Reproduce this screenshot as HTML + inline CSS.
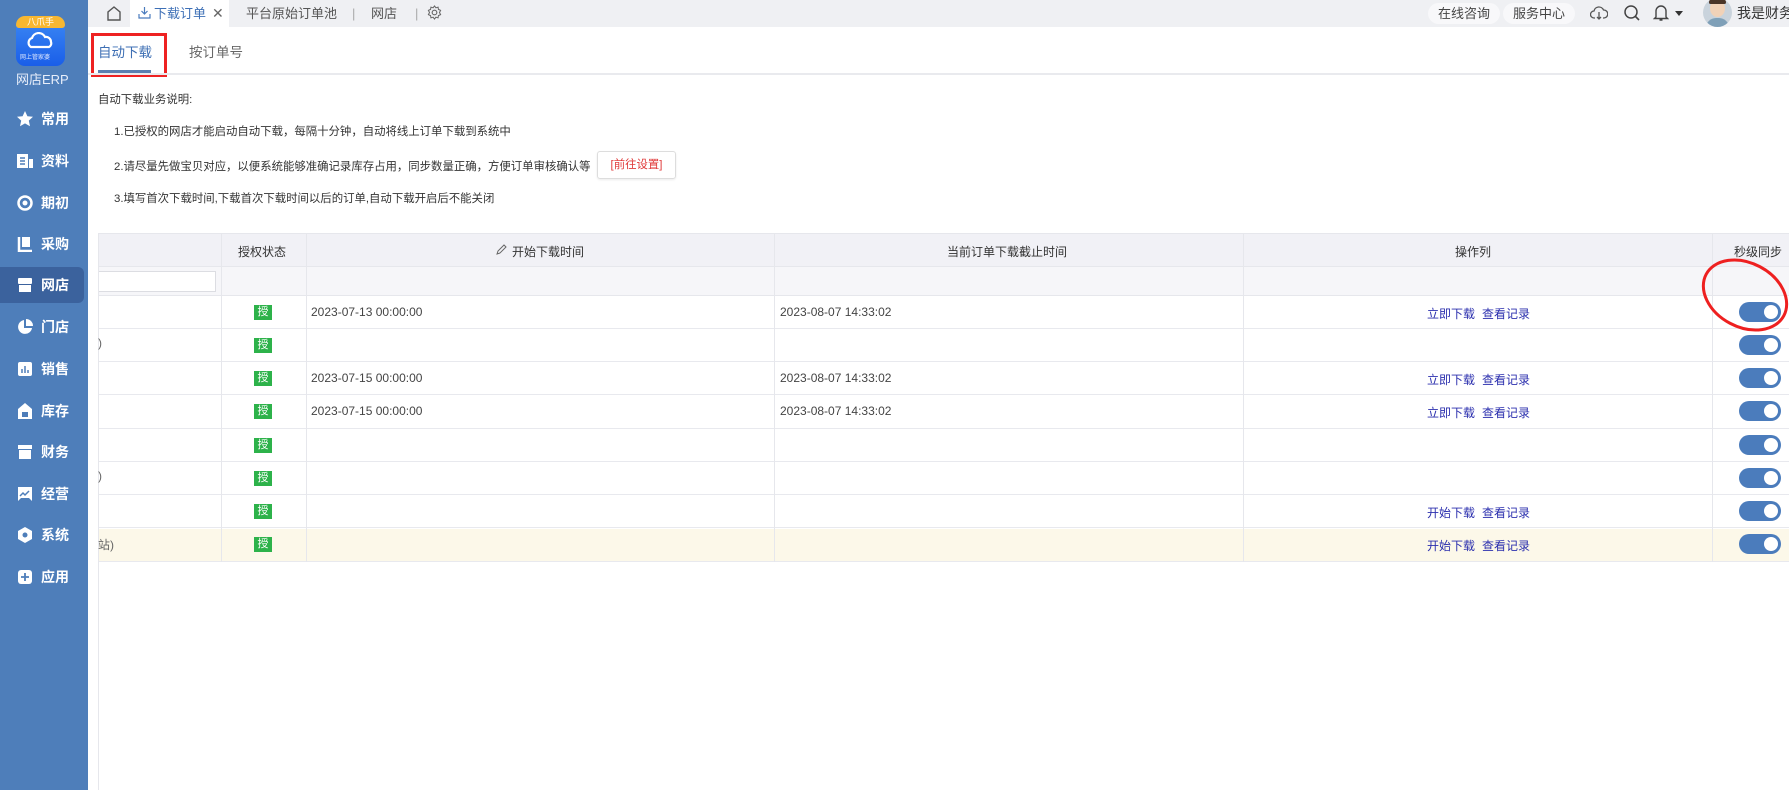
<!DOCTYPE html>
<html><head><meta charset="utf-8">
<style>
*{box-sizing:border-box;margin:0;padding:0}
html,body{width:1789px;height:790px;overflow:hidden}
body{background:#fff;font-family:"Liberation Sans","Noto Sans CJK SC",sans-serif;font-size:13px;color:#333;position:relative;white-space:nowrap}
.abs{position:absolute}
#side{left:0;top:0;width:88px;height:790px;background:#4e7eba}
.item{position:absolute;left:0;width:84px;height:36px;color:#fff;font-weight:bold;font-size:14px;line-height:36px}
.item .ic{position:absolute;left:17px;top:10px;width:16px;height:16px}
.item span{position:absolute;left:41px}
.item.act{background:#3b629d;border-radius:0 6px 6px 0}
#top{left:88px;top:0;width:1701px;height:27px;background:#eff0f3}
.tb{position:absolute;top:0;height:27px;line-height:27px;font-size:13px;color:#555}
.pill{position:absolute;top:3px;height:21px;line-height:21px;padding:0 10px;border-radius:11px;background:#f8f8fa;font-size:13px;color:#444}
.col{position:absolute;top:0;width:1px;background:#e6e7ec}
.row{position:absolute;left:98px;width:1691px;height:33px;border-bottom:1px solid #e8e9ee}
.badge{position:absolute;left:254px;width:18px;height:15px;background:#2db24a;color:#fff;font-size:11px;line-height:15px;text-align:center}
.tgl{position:absolute;left:1739px;width:42px;height:20px;border-radius:10px;background:#4b7cbc}
.tgl:after{content:"";position:absolute;right:3px;top:3px;width:14px;height:14px;border-radius:50%;background:#fff}
.lk{position:absolute;color:#2b2fae;font-size:12px}
.dt{position:absolute;font-size:12px;color:#444}
.ds{position:absolute;font-size:11.4px;color:#333}
</style></head><body>
<div id="side" class="abs">
 <div class="abs" style="left:16px;top:16px;width:49px;height:50px;border-radius:9px;background:linear-gradient(#3d8af5,#1a5ee8)"></div>
 <div class="abs" style="left:16px;top:16px;width:49px;height:12px;border-radius:9px 9px 3px 3px;background:#f7b731;color:#fff;font-size:9px;text-align:center;line-height:12px">八爪手</div>
 <svg class="abs" style="left:25px;top:32px" width="32" height="18" viewBox="0 0 32 18"><path d="M6 15a5 5 0 0 1 1-9a7 7 0 0 1 13-1a5 5 0 0 1 6 5a4 4 0 0 1-2 5z" fill="none" stroke="#fff" stroke-width="2.2"/></svg>
 <div class="abs" style="left:20px;top:52px;font-size:6px;color:#dfe9ff">网上管家婆</div>
 <div class="abs" style="left:16px;top:69px;color:#e8eefa;font-size:13px">网店ERP</div>
 <div class="item" style="top:101px"><svg class="ic" viewBox="0 0 16 16"><path d="M8 0l2.4 5.2 5.6.6-4.2 3.8 1.2 5.6L8 12.4 3 15.2l1.2-5.6L0 5.8l5.6-.6z" fill="#fff"/></svg><span>常用</span></div>
 <div class="item" style="top:143px"><svg class="ic" viewBox="0 0 16 16"><rect x="0" y="1" width="11" height="14" fill="#fff"/><rect x="12" y="6" width="4" height="9" fill="#fff"/><path d="M3 5h5M3 8h5M3 11h5" stroke="#4e7eba" stroke-width="1.5"/></svg><span>资料</span></div>
 <div class="item" style="top:185px"><svg class="ic" viewBox="0 0 16 16"><circle cx="8" cy="8" r="6.5" fill="none" stroke="#fff" stroke-width="2.5"/><circle cx="8" cy="8" r="2.5" fill="#fff"/></svg><span>期初</span></div>
 <div class="item" style="top:226px"><svg class="ic" viewBox="0 0 16 16"><path d="M2 1v14h13" fill="none" stroke="#fff" stroke-width="2.5"/><rect x="5" y="1" width="8" height="10" fill="#fff"/></svg><span>采购</span></div>
 <div class="item act" style="top:267px"><svg class="ic" viewBox="0 0 16 16"><rect x="1" y="1" width="14" height="6" rx="1" fill="#fff"/><rect x="2" y="8" width="12" height="7" fill="#fff"/></svg><span>网店</span></div>
 <div class="item" style="top:309px"><svg class="ic" viewBox="0 0 16 16"><path d="M7 1a7 7 0 1 0 8 8H7z" fill="#fff"/><path d="M9 0v7h7A7 7 0 0 0 9 0z" fill="#fff"/></svg><span>门店</span></div>
 <div class="item" style="top:351px"><svg class="ic" viewBox="0 0 16 16"><rect x="1" y="1" width="14" height="14" rx="2" fill="#fff"/><path d="M5 12V8M8 12V5M11 12V9" stroke="#4e7eba" stroke-width="1.5"/></svg><span>销售</span></div>
 <div class="item" style="top:393px"><svg class="ic" viewBox="0 0 16 16"><path d="M8 0L1 6v10h14V6z" fill="#fff"/><rect x="5" y="9" width="6" height="5" fill="#4e7eba"/></svg><span>库存</span></div>
 <div class="item" style="top:434px"><svg class="ic" viewBox="0 0 16 16"><rect x="1" y="1" width="14" height="4" fill="#fff"/><rect x="2" y="6" width="12" height="9" fill="#fff"/></svg><span>财务</span></div>
 <div class="item" style="top:476px"><svg class="ic" viewBox="0 0 16 16"><path d="M1 1h14v14l-3-3H4l-3 3z" fill="#fff"/><path d="M3 10l3-3 2 2 4-4" stroke="#4e7eba" stroke-width="1.5" fill="none"/></svg><span>经营</span></div>
 <div class="item" style="top:517px"><svg class="ic" viewBox="0 0 16 16"><path d="M8 0l7 4v8l-7 4-7-4V4z" fill="#fff"/><circle cx="8" cy="8" r="2.5" fill="#4e7eba"/></svg><span>系统</span></div>
 <div class="item" style="top:559px"><svg class="ic" viewBox="0 0 16 16"><rect x="1" y="1" width="14" height="14" rx="3" fill="#fff"/><path d="M8 4v8M4 8h8" stroke="#4e7eba" stroke-width="1.8"/></svg><span>应用</span></div>
</div>

<div id="top" class="abs">
 <svg class="abs" style="left:18px;top:5px" width="16" height="16" viewBox="0 0 16 16"><path d="M2 15V7l6-5 6 5v8z" fill="none" stroke="#555" stroke-width="1.4"/></svg>
 <div class="abs" style="left:42px;top:0;width:99px;height:27px;background:#fff"></div>
 <svg class="abs" style="left:50px;top:6px" width="13" height="13" viewBox="0 0 13 13"><path d="M6.5 1v7M3.5 5l3 3 3-3M1 8v4h11V8" fill="none" stroke="#4a7bbd" stroke-width="1.2"/></svg>
 <div class="tb" style="left:66px;color:#3d6fb6">下载订单</div>
 <div class="tb" style="left:124px;color:#666;font-size:14px">✕</div>
 <div class="tb" style="left:158px">平台原始订单池</div>
 <div class="tb" style="left:264px;color:#aaa">|</div>
 <div class="tb" style="left:283px">网店</div>
 <div class="tb" style="left:327px;color:#aaa">|</div>
 <svg class="abs" style="left:339px;top:5px" width="15" height="15" viewBox="0 0 16 16"><circle cx="8" cy="8" r="2.5" fill="none" stroke="#666" stroke-width="1.2"/><path d="M8 1l1.5 2 2.3-.7.4 2.4 2.3 1L13.3 8l1.2 2.3-2.3 1-.4 2.4-2.3-.7L8 15l-1.5-2-2.3.7-.4-2.4-2.3-1L2.7 8 1.5 5.7l2.3-1 .4-2.4 2.3.7z" fill="none" stroke="#666" stroke-width="1.1"/></svg>
 <div class="pill" style="left:1340px">在线咨询</div>
 <div class="pill" style="left:1415px">服务中心</div>
 <svg class="abs" style="left:1502px;top:4px" width="18" height="18" viewBox="0 0 18 18"><path d="M5 14H4a3.5 3.5 0 0 1 0-7a5 5 0 0 1 9.5-1A4 4 0 0 1 14 14h-1M9 8v7M7 13l2 2 2-2" fill="none" stroke="#555" stroke-width="1.3"/></svg>
 <svg class="abs" style="left:1535px;top:4px" width="18" height="18" viewBox="0 0 18 18"><circle cx="8" cy="8" r="6" fill="none" stroke="#444" stroke-width="1.5"/><path d="M12.5 12.5L16 16" stroke="#444" stroke-width="1.6"/></svg>
 <svg class="abs" style="left:1565px;top:3px" width="16" height="19" viewBox="0 0 16 19"><path d="M3 14V8a5 5 0 0 1 10 0v6l1.5 1.5h-13zM6.5 17h3" fill="none" stroke="#444" stroke-width="1.4"/></svg>
 <div class="abs" style="left:1587px;top:11px;border:4px solid transparent;border-top:5px solid #333"></div>
 <div class="abs" style="left:1615px;top:-2px;width:29px;height:29px;border-radius:50%;background:#c9d3dc;overflow:hidden"><div class="abs" style="left:7px;top:2px;width:15px;height:17px;border-radius:50%;background:#f1d2b8"></div><div class="abs" style="left:6px;top:-2px;width:17px;height:8px;border-radius:8px 8px 2px 2px;background:#4a3528"></div><div class="abs" style="left:3px;top:20px;width:23px;height:12px;border-radius:10px 10px 0 0;background:#7fa0b8"></div></div>
 <div class="tb" style="left:1649px;color:#333;font-size:14px">我是财务</div>
</div>

<!-- sub tabs -->
<div class="abs" style="left:98px;top:41px;font-size:13.5px;color:#3e6fb4">自动下载</div>
<div class="abs" style="left:98px;top:70px;width:53px;height:3px;background:#5a7fb0"></div>
<div class="abs" style="left:189px;top:41px;font-size:13.5px;color:#666">按订单号</div>
<div class="abs" style="left:91px;top:33px;width:76px;height:44px;border:3px solid #ee2222"></div>
<div class="abs" style="left:88px;top:73px;width:1701px;height:2px;background:#e9eaee"></div>

<div class="ds" style="left:98px;top:91px">自动下载业务说明:</div>
<div class="ds" style="left:114px;top:123px">1.已授权的网店才能启动自动下载，每隔十分钟，自动将线上订单下载到系统中</div>
<div class="ds" style="left:114px;top:158px">2.请尽量先做宝贝对应，以便系统能够准确记录库存占用，同步数量正确，方便订单审核确认等</div>
<div class="abs" style="left:597px;top:151px;width:79px;height:28px;border:1px solid #ddd;border-radius:3px;color:#e03a3a;font-size:11.4px;text-align:center;line-height:26px;box-shadow:0 1px 2px rgba(0,0,0,.08)">[前往设置]</div>
<div class="ds" style="left:114px;top:190px">3.填写首次下载时间,下载首次下载时间以后的订单,自动下载开启后不能关闭</div>

<!-- table -->
<div class="abs" style="left:98px;top:233px;width:1691px;height:34px;background:#f1f1f6;border-top:1px solid #e6e7ec;border-bottom:1px solid #e6e7ec"></div>
<div class="abs" style="left:98px;top:267px;width:1691px;height:29px;background:#f6f6f9;border-bottom:1px solid #e6e7ec"></div>
<div class="abs" style="left:98px;top:271px;width:118px;height:21px;background:#fff;border:1px solid #dcdde2;border-left:none"></div>
<div class="abs" style="left:238px;top:243px;font-size:12px">授权状态</div>
<svg class="abs" style="left:495px;top:244px" width="12" height="12" viewBox="0 0 12 12"><path d="M2 10l1-3 6-6 2 2-6 6zM2 10l3-1" fill="none" stroke="#666" stroke-width="1"/></svg>
<div class="abs" style="left:512px;top:243px;font-size:12px">开始下载时间</div>
<div class="abs" style="left:947px;top:243px;font-size:12px">当前订单下载截止时间</div>
<div class="abs" style="left:1455px;top:243px;font-size:12px">操作列</div>
<div class="abs" style="left:1734px;top:243px;font-size:12px">秒级同步</div>

<div class="row" style="top:296px"></div>
<div class="row" style="top:329px"></div>
<div class="row" style="top:362px"></div>
<div class="row" style="top:396px"></div>
<div class="row" style="top:429px"></div>
<div class="row" style="top:462px"></div>
<div class="row" style="top:495px"></div>
<div class="row" style="top:529px;background:#fcf8e9"></div>

<div class="col" style="left:98px;height:557px;top:233px"></div>
<div class="col" style="left:221px;height:329px;top:233px"></div>
<div class="col" style="left:306px;height:329px;top:233px"></div>
<div class="col" style="left:774px;height:329px;top:233px"></div>
<div class="col" style="left:1243px;height:329px;top:233px"></div>
<div class="col" style="left:1712px;height:329px;top:233px"></div>

<div class="badge" style="top:305px">授</div>
<div class="badge" style="top:338px">授</div>
<div class="badge" style="top:371px">授</div>
<div class="badge" style="top:404px">授</div>
<div class="badge" style="top:438px">授</div>
<div class="badge" style="top:471px">授</div>
<div class="badge" style="top:504px">授</div>
<div class="badge" style="top:537px">授</div>

<div class="abs" style="left:98px;top:336px;color:#666;font-size:12px">)</div>
<div class="abs" style="left:98px;top:469px;color:#666;font-size:12px">)</div>
<div class="abs" style="left:98px;top:536px;color:#666;font-size:12px">站)</div>

<div class="dt" style="left:311px;top:305px">2023-07-13 00:00:00</div>
<div class="dt" style="left:780px;top:305px">2023-08-07 14:33:02</div>
<div class="dt" style="left:311px;top:371px">2023-07-15 00:00:00</div>
<div class="dt" style="left:780px;top:371px">2023-08-07 14:33:02</div>
<div class="dt" style="left:311px;top:404px">2023-07-15 00:00:00</div>
<div class="dt" style="left:780px;top:404px">2023-08-07 14:33:02</div>

<div class="lk" style="left:1427px;top:305px">立即下载</div><div class="lk" style="left:1482px;top:305px">查看记录</div>
<div class="lk" style="left:1427px;top:371px">立即下载</div><div class="lk" style="left:1482px;top:371px">查看记录</div>
<div class="lk" style="left:1427px;top:404px">立即下载</div><div class="lk" style="left:1482px;top:404px">查看记录</div>
<div class="lk" style="left:1427px;top:504px">开始下载</div><div class="lk" style="left:1482px;top:504px">查看记录</div>
<div class="lk" style="left:1427px;top:537px">开始下载</div><div class="lk" style="left:1482px;top:537px">查看记录</div>

<div class="tgl" style="top:302px"></div>
<div class="tgl" style="top:335px"></div>
<div class="tgl" style="top:368px"></div>
<div class="tgl" style="top:401px"></div>
<div class="tgl" style="top:435px"></div>
<div class="tgl" style="top:468px"></div>
<div class="tgl" style="top:501px"></div>
<div class="tgl" style="top:534px"></div>

<svg class="abs" style="left:1695px;top:255px" width="94" height="80" viewBox="0 0 94 80"><ellipse cx="50" cy="40" rx="44" ry="32" transform="rotate(28 50 40)" fill="none" stroke="#ee2020" stroke-width="3"/></svg>
</body></html>
